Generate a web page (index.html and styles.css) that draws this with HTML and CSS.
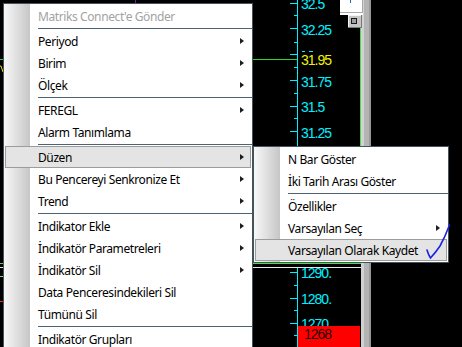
FILE: index.html
```html
<!DOCTYPE html>
<html lang="tr">
<head>
<meta charset="UTF-8">
<title>Grafik Menü</title>
<link rel="stylesheet" href="styles.css">
</head>
<body>

<div class="screen">
    <!-- chart behind the context menu -->
    <svg class="chart" width="462" height="347" viewBox="0 0 462 347">
        <rect x="135" y="0" width="1" height="3" fill="#8a10b0"/>
        <polyline points="0,66 1,66 2,69 3,72" fill="none" stroke="#f0e000" stroke-width="1"/>
        <rect x="0" y="276" width="3" height="1" fill="#7ee07e"/>
        <rect x="0" y="301" width="3" height="1" fill="#ff2020"/>

        <rect x="0" y="59" width="297" height="1" fill="#2ed22e"/>

        <!-- upper axis -->
        <rect x="297" y="0" width="1" height="264" fill="#00f0ff"/>
        <g fill="#00f0ff">
            <rect x="290" y="3" width="7" height="1"/>
            <rect x="294" y="15" width="3" height="1"/>
            <rect x="290" y="28" width="7" height="1"/>
            <rect x="294" y="42" width="3" height="1"/>
            <rect x="290" y="54" width="7" height="1"/>
            <rect x="294" y="67" width="3" height="1"/>
            <rect x="290" y="80" width="7" height="1"/>
            <rect x="294" y="93" width="3" height="1"/>
            <rect x="290" y="106" width="7" height="1"/>
            <rect x="294" y="118" width="3" height="1"/>
            <rect x="290" y="131" width="7" height="1"/>
            <rect x="302" y="51" width="3" height="1"/>
            <rect x="309" y="51" width="4" height="1"/>
        </g>
        <g class="axis-label">
            <text x="301" y="9">32.5</text>
            <text x="301" y="35">32.25</text>
            <text x="301" y="86.5">31.75</text>
            <text x="301" y="111.5">31.5</text>
            <text x="301" y="137.5">31.25</text>
        </g>
        <text class="axis-label price" x="301" y="65">31.95</text>

        <!-- pane frame -->
        <rect x="360" y="28" width="1" height="236" fill="#46e046"/>
        <rect x="0" y="263" width="361" height="1" fill="#46e046"/>
        <rect x="0" y="267" width="361" height="1" fill="#e8e8e8"/>

        <!-- lower axis -->
        <rect x="297" y="268" width="1" height="79" fill="#00f0ff"/>
        <g fill="#00f0ff">
            <rect x="290" y="272" width="7" height="1"/>
            <rect x="294" y="285" width="3" height="1"/>
            <rect x="290" y="298" width="7" height="1"/>
            <rect x="294" y="310" width="3" height="1"/>
            <rect x="290" y="323" width="7" height="1"/>
            <rect x="294" y="335" width="3" height="1"/>
        </g>
        <g class="axis-label">
            <text x="301" y="278">1290.</text>
            <text x="301" y="304">1280.</text>
            <text x="301" y="329">1270</text>
        </g>
        <rect x="298" y="326" width="62" height="21" fill="#ff0000"/>
        <text class="axis-label last" x="304" y="339">1268</text>

        <!-- scroll strip -->
        <rect x="361" y="0" width="3" height="347" fill="#d2d2d2"/>
        <rect x="364" y="0" width="5" height="347" fill="#b4b4b4"/>
        <rect x="369" y="0" width="2" height="347" fill="#989898"/>

        <!-- top corner box and button -->
        <rect x="340" y="0" width="23" height="15" fill="#ffffff"/>
        <rect x="362" y="0" width="1" height="13" fill="#a8a8a8"/>
        <rect x="340" y="12" width="23" height="1" fill="#a8a8a8"/>
        <rect x="350" y="0" width="1" height="3" fill="#2a66c8"/>
        <rect x="348" y="15" width="14" height="13" fill="#c6c6c6"/>
        <rect x="348" y="15" width="14" height="1" fill="#f4f4f4"/>
        <rect x="348" y="15" width="1" height="13" fill="#f4f4f4"/>
        <rect x="348" y="27" width="14" height="1" fill="#7a7a7a"/>
        <rect x="361" y="15" width="1" height="13" fill="#7a7a7a"/>
        <rect x="351.5" y="18.5" width="5" height="5" fill="#a0a0a0" stroke="#1a1a1a"/>
    </svg>

    <div class="menu main-menu">
        <div class="item disabled">Matriks Connect'e Gönder</div>
        <div class="sep"></div>
        <div class="item">Periyod<span class="arrow"></span></div>
        <div class="item">Birim<span class="arrow"></span></div>
        <div class="item">Ölçek<span class="arrow"></span></div>
        <div class="sep"></div>
        <div class="item">FEREGL<span class="arrow"></span></div>
        <div class="item">Alarm Tanımlama</div>
        <div class="sep"></div>
        <div class="item active">Düzen<span class="arrow"></span></div>
        <div class="item">Bu Pencereyi Senkronize Et<span class="arrow"></span></div>
        <div class="item">Trend<span class="arrow"></span></div>
        <div class="sep"></div>
        <div class="item">Indikator Ekle<span class="arrow"></span></div>
        <div class="item">İndikatör Parametreleri<span class="arrow"></span></div>
        <div class="item">İndikatör Sil<span class="arrow"></span></div>
        <div class="item">Data Penceresindekileri Sil</div>
        <div class="item">Tümünü Sil</div>
        <div class="sep"></div>
        <div class="item">Indikatör Grupları</div>
    </div>

    <div class="menu sub-menu">
        <div class="item">N Bar Göster</div>
        <div class="item">İki Tarih Arası Göster</div>
        <div class="sep"></div>
        <div class="item">Özellikler</div>
        <div class="item">Varsayılan Seç<span class="arrow"></span></div>
        <div class="item active">Varsayılan Olarak Kaydet</div>
    </div>

    <!-- hand drawn tick over the menu -->
    <svg class="check" width="40" height="45" viewBox="0 0 40 45">
        <path d="M7 30 Q8.5 35 10.5 38 Q16 32 20 26 Q25 17 29.5 5" fill="none" stroke="#1c22e0" stroke-width="1.6" stroke-linecap="round"/>
    </svg>
</div>

</body>
</html>
```

FILE: styles.css
```css
body {
    margin: 0;
    background-color: #000;
    font-family: "Noto Sans", "Open Sans", sans-serif;
    overflow: hidden;
}

.screen {
    position: relative;
    width: 462px;
    height: 347px;
    overflow: hidden;
    background-color: #000;
}

.chart {
    display: block;
}

.axis-label {
    font-family: "Liberation Sans", Arial, sans-serif;
    font-size: 14px;
    letter-spacing: -1px;
    fill: #00f0ff;
}

.axis-label.price {
    fill: #f2f200;
}

.axis-label.last {
    fill: #220000;
}

/* context menus */
.menu {
    position: absolute;
    box-sizing: border-box;
    padding: 1px 0;
    border: 1px solid #44535c;
    background: linear-gradient(to right, #f8f8f8, #c6c6c6) no-repeat left top / 26px 100%, #fff;
    font-size: 12px;
    letter-spacing: -0.4px;
    color: #000;
}

.main-menu {
    left: 3px;
    top: 3px;
    width: 250px;
}

.sub-menu {
    left: 253px;
    top: 146px;
    width: 196px;
}

.item {
    display: flex;
    align-items: center;
    justify-content: space-between;
    height: 22px;
    margin: 0 1px;
    padding: 0 6px 0 32px;
    border: 1px solid transparent;
    box-sizing: border-box;
    white-space: nowrap;
}

.item.disabled {
    color: #a2a2a2;
}

.item.active {
    background-color: #e4e4e4;
    border-color: #9c9c9c;
}

.arrow {
    width: 0;
    height: 0;
    border-left: 4px solid #1e1e1e;
    border-top: 3.5px solid transparent;
    border-bottom: 3.5px solid transparent;
}

.sep {
    height: 1px;
    margin: 1px 0 1px 34px;
    background-color: #4d6272;
}

.check {
    position: absolute;
    left: 420px;
    top: 220px;
}
```
